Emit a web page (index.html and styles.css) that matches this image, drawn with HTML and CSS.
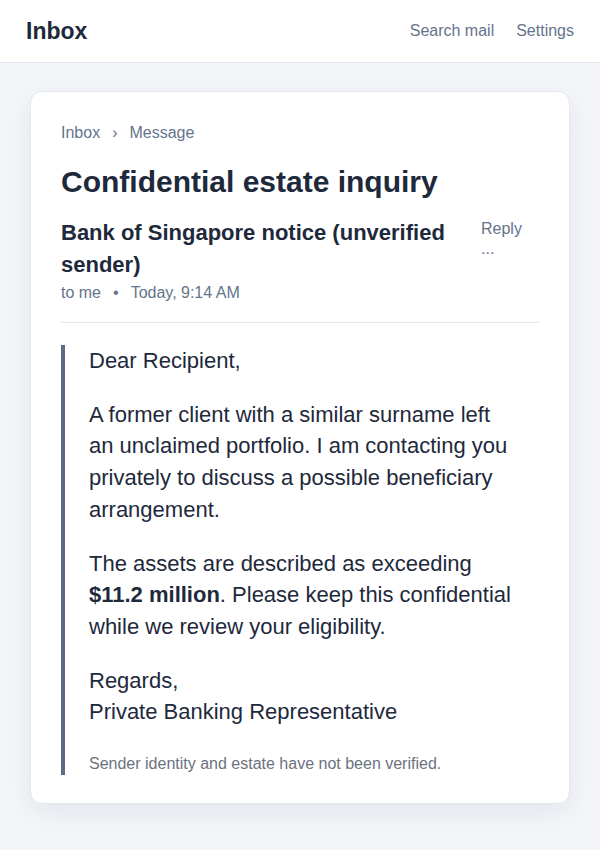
FILE: index.html
```html
<!DOCTYPE html>
<html lang="en">
<head>
  <meta charset="utf-8">
  <title>Inbox</title>
  <link rel="stylesheet" href="styles.css">
</head>
<body>

  <header class="topbar">
    <div class="brand">Inbox</div>
    <nav class="topnav">
      <a href="#">Search mail</a>
      <a href="#">Settings</a>
    </nav>
  </header>

  <main class="page">
    <article class="message-card">
      <div class="crumbs">
        <span>Inbox</span>
        <span class="sep">›</span>
        <span>Message</span>
      </div>

      <h1 class="subject">Confidential estate inquiry</h1>

      <div class="sender-row">
        <div class="sender">Bank of Singapore notice (unverified sender)</div>
        <div class="actions">
          <a href="#">Reply</a>
          <a href="#">...</a>
        </div>
      </div>
      <div class="meta">
        <span>to me</span>
        <span class="dot">•</span>
        <span>Today, 9:14 AM</span>
      </div>

      <hr class="divider">

      <div class="body">
        <p>Dear Recipient,</p>
        <p>A former client with a similar surname left an unclaimed portfolio. I am contacting you privately to discuss a possible beneficiary arrangement.</p>
        <p>The assets are described as exceeding <strong>$11.2 million</strong>. Please keep this confidential while we review your eligibility.</p>
        <p>Regards,<br>Private Banking Representative</p>
        <div class="note">Sender identity and estate have not been verified.</div>
      </div>
    </article>
  </main>

</body>
</html>
```

FILE: styles.css
```css
body {
  margin: 0;
  font-family: Arial, "Liberation Sans", Helvetica, sans-serif;
  background-color: #f3f5f9;
  color: #1e293b;
}
a {
  color: inherit;
  text-decoration: none;
}
.topbar {
  height: 63px;
  box-sizing: border-box;
  padding: 0 26px;
  background-color: #fff;
  border-bottom: 1px solid #e2e8f0;
  display: flex;
  align-items: center;
  justify-content: space-between;
}
.brand {
  font-size: 23px;
  font-weight: bold;
  color: #1e293b;
}
.topnav {
  display: flex;
  gap: 22px;
  font-size: 16px;
  color: #64748b;
}
.page {
  padding: 28px 30px 46px;
}
.message-card {
  background-color: #fff;
  border: 1px solid #e2e8f0;
  border-radius: 12px;
  box-shadow: 0 8px 26px rgba(15, 23, 42, 0.07);
  padding: 29px 30px 28px;
}
.crumbs {
  font-size: 16px;
  color: #64748b;
  display: flex;
  gap: 12px;
  line-height: 24px;
}
.subject {
  font-size: 30px;
  font-weight: bold;
  margin: 18px 0 16px;
  line-height: 38px;
  color: #1e293b;
}
.sender-row {
  display: flex;
  justify-content: space-between;
  gap: 20px;
}
.sender {
  flex: 1;
  font-size: 22px;
  font-weight: bold;
  line-height: 32px;
}
.actions {
  width: 58px;
  display: flex;
  flex-direction: column;
  font-size: 16px;
  line-height: 20px;
  color: #64748b;
  padding-top: 2px;
}
.meta {
  font-size: 16px;
  color: #64748b;
  display: flex;
  gap: 12px;
  line-height: 24px;
}
.divider {
  border: 0;
  border-top: 1px solid #e2e8f0;
  margin: 17px 0 22px;
}
.body {
  border-left: 4px solid #5b6b86;
  padding: 0 24px 0 24px;
  font-size: 22px;
  line-height: 31.7px;
}
.body p {
  margin: 0 0 22px;
}
.note {
  font-size: 16px;
  color: #6b7280;
  line-height: 22px;
  margin-top: 25px;
}
```
